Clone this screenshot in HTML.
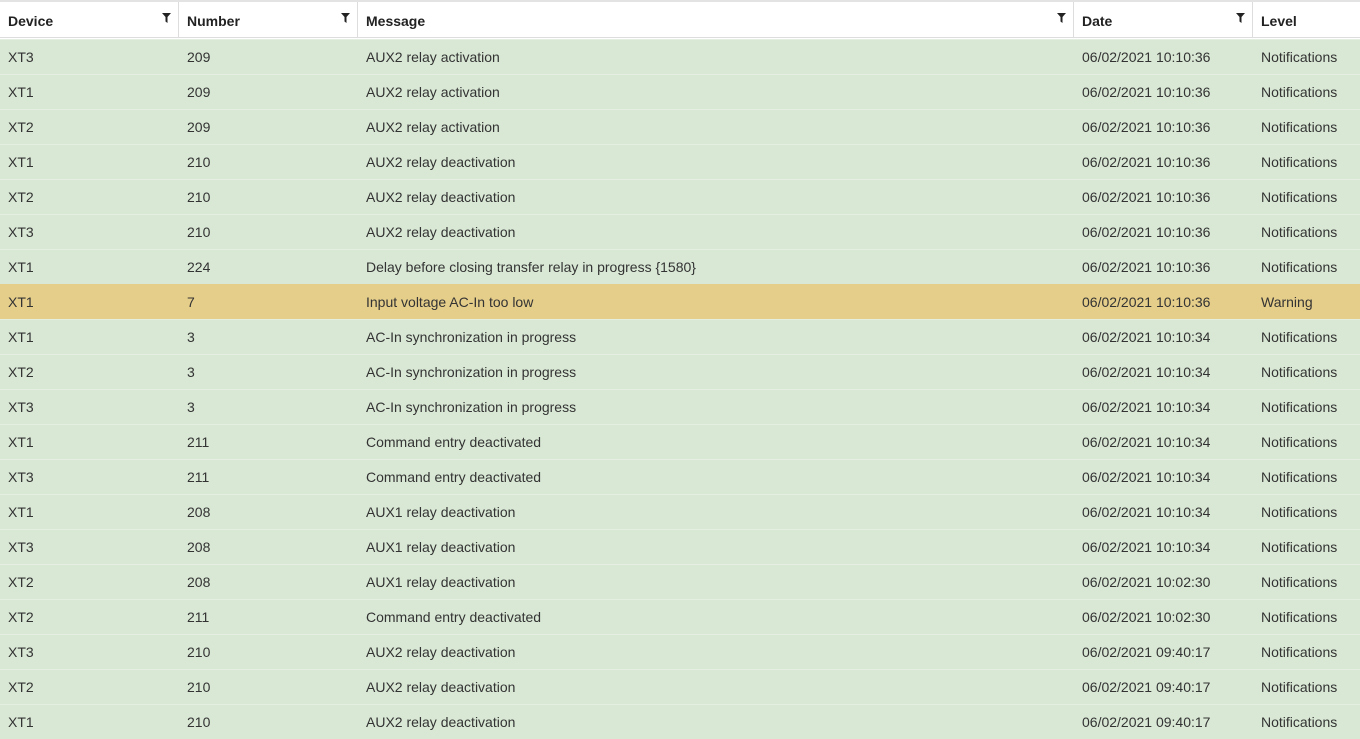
<!DOCTYPE html>
<html><head><style>
body{margin:0;width:1360px;height:736px;overflow:hidden;background:#fff;font-family:"Liberation Sans",Arial,sans-serif;font-size:14px;color:#333}
.hd{position:absolute;top:0;left:0;width:1360px;height:38px;border-top:2px solid #e3e3e3;box-sizing:border-box;background:#fff;border-bottom:1px solid #ddd}
.hc{position:absolute;top:0;height:36px;line-height:38px;font-weight:bold;color:#222;padding-left:8px;box-sizing:border-box;border-right:1px solid #ddd}
.hc svg{position:absolute;right:7px;top:11px}
.r{position:absolute;left:0;width:1360px;height:35px;background:#d9e8d5;border-top:1px solid #e4eee1;box-sizing:border-box}
.r.w{background:#e5cd8a;border-top-color:#e5cd8a}
.r span{position:absolute;top:0;line-height:34px;white-space:nowrap}
</style></head><body>
<div class="hd">
<div class="hc" style="left:0;width:179px">Device<svg width="9" height="10" viewBox="0 0 9 10"><path d="M0 0H9L5.5 4V10L3.5 8.5V4Z" fill="#222"/></svg></div>
<div class="hc" style="left:179px;width:179px">Number<svg width="9" height="10" viewBox="0 0 9 10"><path d="M0 0H9L5.5 4V10L3.5 8.5V4Z" fill="#222"/></svg></div>
<div class="hc" style="left:358px;width:716px">Message<svg width="9" height="10" viewBox="0 0 9 10"><path d="M0 0H9L5.5 4V10L3.5 8.5V4Z" fill="#222"/></svg></div>
<div class="hc" style="left:1074px;width:179px">Date<svg width="9" height="10" viewBox="0 0 9 10"><path d="M0 0H9L5.5 4V10L3.5 8.5V4Z" fill="#222"/></svg></div>
<div class="hc" style="left:1253px;width:107px;border-right:none">Level</div>
</div>
<div id="rows"></div>
<script>
var d=[["XT3","209","AUX2 relay activation","10:10:36"],["XT1","209","AUX2 relay activation","10:10:36"],["XT2","209","AUX2 relay activation","10:10:36"],["XT1","210","AUX2 relay deactivation","10:10:36"],["XT2","210","AUX2 relay deactivation","10:10:36"],["XT3","210","AUX2 relay deactivation","10:10:36"],["XT1","224","Delay before closing transfer relay in progress {1580}","10:10:36"],["XT1","7","Input voltage AC-In too low","10:10:36","Warning"],["XT1","3","AC-In synchronization in progress","10:10:34"],["XT2","3","AC-In synchronization in progress","10:10:34"],["XT3","3","AC-In synchronization in progress","10:10:34"],["XT1","211","Command entry deactivated","10:10:34"],["XT3","211","Command entry deactivated","10:10:34"],["XT1","208","AUX1 relay deactivation","10:10:34"],["XT3","208","AUX1 relay deactivation","10:10:34"],["XT2","208","AUX1 relay deactivation","10:02:30"],["XT2","211","Command entry deactivated","10:02:30"],["XT3","210","AUX2 relay deactivation","09:40:17"],["XT2","210","AUX2 relay deactivation","09:40:17"],["XT1","210","AUX2 relay deactivation","09:40:17"]];
var h="";d.forEach(function(r,i){h+='<div class="r'+(r[4]?' w':'')+'" style="top:'+(39+35*i)+'px"><span style="left:8px">'+r[0]+'</span><span style="left:187px">'+r[1]+'</span><span style="left:366px">'+r[2]+'</span><span style="left:1082px">06/02/2021 '+r[3]+'</span><span style="left:1261px">'+(r[4]||'Notifications')+'</span></div>'});
document.getElementById('rows').innerHTML=h;
</script>
</body></html>
